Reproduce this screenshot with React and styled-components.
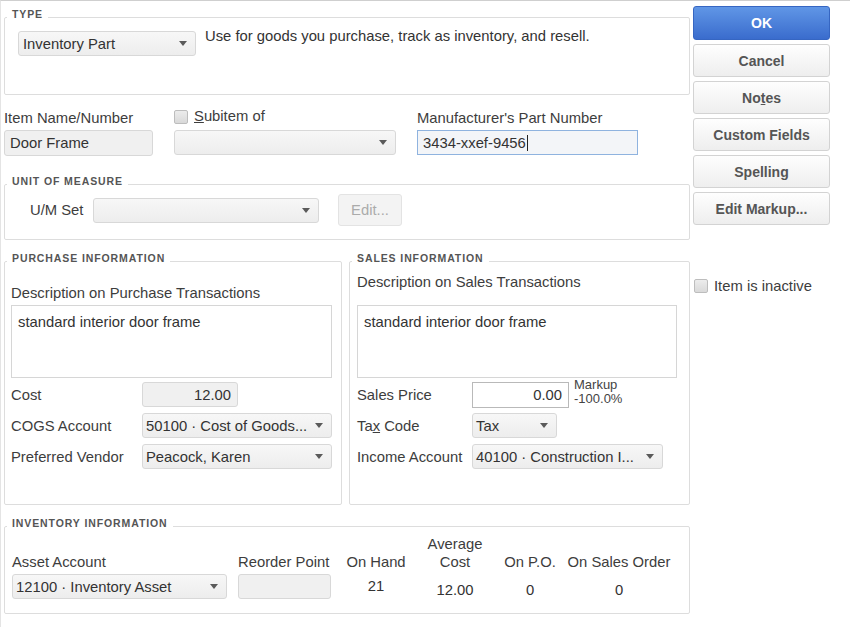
import React from 'react';
import styled, { createGlobalStyle } from 'styled-components';

const GlobalStyle = createGlobalStyle`
  html, body {
    margin: 0;
    padding: 0;
    background: #fff;
  }
  body {
    font-family: "Liberation Sans", Arial, sans-serif;
    font-size: 14.8px;
    color: #3d3d3d;
  }
  * {
    box-sizing: border-box;
  }
`;

const Window = styled.div`
  display: flex;
  align-items: flex-start;
  width: 850px;
  height: 627px;
  border-top: 1px solid #cfcfcf;
  border-left: 1px solid #e4e4e4;
  padding: 5px 0 0 3px;
`;

const Main = styled.div`
  width: 686px;
  margin-top: 2px;
  display: flex;
  flex-direction: column;
`;

const Side = styled.div`
  width: 137px;
  margin-left: 3px;
  display: flex;
  flex-direction: column;
`;

const Group = styled.fieldset`
  --pl: ${(p) => p.$pl || 7}px;
  margin: ${(p) => p.$mt || 0}px 0 0 0;
  min-width: 0;
  border: 1px solid #dddddd;
  border-radius: 2px;
  padding: ${(p) => p.$pt || 0}px ${(p) => p.$pr || 0}px ${(p) => p.$pb || 0}px var(--pl);
`;

const Legend = styled.legend`
  margin-left: calc(2px - var(--pl));
  padding: 0 5px 6px;
  font-size: 10.5px;
  line-height: 12px;
  font-weight: bold;
  letter-spacing: 0.9px;
  color: #555;
`;

const SelectBox = styled.div`
  display: flex;
  align-items: center;
  justify-content: space-between;
  width: ${(p) => p.$w}px;
  height: 25px;
  padding: 0 8px 0 ${(p) => p.$pad || 3}px;
  border: 1px solid #d8d8d8;
  border-radius: 3px;
  background: linear-gradient(#f7f7f7, #ededed);
  color: #333;
  white-space: nowrap;
  overflow: hidden;
`;

const Field = styled.div`
  display: flex;
  align-items: center;
  justify-content: ${(p) => (p.$right ? 'flex-end' : 'flex-start')};
  width: ${(p) => p.$w}px;
  height: ${(p) => p.$h || 25}px;
  padding: 0 6px 0 5px;
  border: 1px solid ${(p) => p.$border || '#d8d8d8'};
  border-radius: ${(p) => (p.$square ? 0 : 3)}px;
  background: ${(p) => p.$bg || '#f0f0f0'};
  color: #333;
  white-space: nowrap;
`;

const Caret = () => (
  <svg width="8" height="5" viewBox="0 0 8 5">
    <path d="M0 0h8L4 5z" fill="#5a5a5a" />
  </svg>
);

const Select = ({ w, children, pad }) => (
  <SelectBox $w={w} $pad={pad}>
    <span>{children}</span>
    <Caret />
  </SelectBox>
);

const TypeRow = styled.div`
  display: flex;
  align-items: flex-start;
  gap: 9px;
`;

const Hint = styled.div`
  margin-top: -3px;
  line-height: 17px;
  color: #333;
`;

const ItemRow = styled.div`
  display: grid;
  grid-template-columns: 149px 222px 221px;
  column-gap: 21px;
  margin-top: 15px;
`;

const Column = styled.div`
  display: flex;
  flex-direction: column;
`;

const Label = styled.div`
  display: flex;
  align-items: center;
  gap: 6px;
  line-height: 17px;
  margin-bottom: ${(p) => p.$mb ?? 3}px;
  margin-top: ${(p) => p.$mt || 0}px;
  color: #3d3d3d;
  white-space: nowrap;
`;

const Check = styled.span`
  display: inline-block;
  width: 14px;
  height: 14px;
  border: 1px solid #bdbdbd;
  border-radius: 2px;
  background: linear-gradient(#ececec, #d9d9d9);
`;

const Cursor = styled.span`
  display: inline-block;
  width: 1px;
  height: 16px;
  margin-left: 1px;
  background: #222;
`;

const UomRow = styled.div`
  display: flex;
  align-items: center;
  height: 32px;
`;

const UomLabel = styled.span`
  width: 63px;
`;

const DisabledButton = styled.div`
  display: flex;
  align-items: center;
  justify-content: center;
  width: 64px;
  height: 32px;
  margin-left: 19px;
  border: 1px solid #e3e3e3;
  border-radius: 3px;
  background: #f3f3f3;
  color: #ababab;
`;

const InfoRow = styled.div`
  display: grid;
  grid-template-columns: 338px 341px;
  column-gap: 7px;
  margin-top: 12px;
`;

const Desc = styled.div`
  width: ${(p) => p.$w}px;
  height: 73px;
  padding: 8px 6px;
  border: 1px solid #d6d6d6;
  background: #fff;
  color: #333;
`;

const FormGrid = styled.div`
  display: grid;
  grid-template-columns: ${(p) => p.$label}px auto;
  grid-auto-rows: 25px;
  row-gap: 6px;
  align-items: center;
  margin-top: 4px;
`;

const PriceCell = styled.div`
  display: flex;
  align-items: center;
`;

const Markup = styled.div`
  margin-left: 5px;
  margin-top: -5px;
  font-size: 13px;
  line-height: 14px;
  color: #444;
`;

const InvGrid = styled.div`
  display: grid;
  grid-template-columns: 226px 102px 72px 86px 64px 114px;
  grid-template-rows: 36px 25px;
  row-gap: 3px;
`;

const Head = styled.div`
  align-self: end;
  line-height: 18px;
  text-align: ${(p) => (p.$left ? 'left' : 'center')};
  color: #3d3d3d;
  white-space: nowrap;
`;

const Value = styled.div`
  align-self: ${(p) => (p.$drop ? 'end' : 'center')};
  text-align: center;
  line-height: 17px;
  color: #333;
`;

const Button = styled.button`
  height: ${(p) => (p.$primary ? 34 : 33)}px;
  margin: 0 0 4px;
  border: 1px solid ${(p) => (p.$primary ? '#3666c2' : '#d3d3d3')};
  border-radius: 3px;
  background: ${(p) =>
    p.$primary ? 'linear-gradient(#6096e6, #3a6ccd)' : 'linear-gradient(#fefefe, #eeeeee)'};
  color: ${(p) => (p.$primary ? '#fff' : '#555')};
  font-family: "Liberation Sans", Arial, sans-serif;
  font-size: 14px;
  font-weight: bold;
  padding: 0;
`;

const Inactive = styled.div`
  display: flex;
  align-items: center;
  gap: 6px;
  margin-top: 49px;
  margin-left: 1px;
  color: #3d3d3d;
`;

export default function App() {
  return (
    <>
      <GlobalStyle />
      <Window>
        <Main>
          <Group $pl={13} $pt={5} $pb={38}>
            <Legend>TYPE</Legend>
            <TypeRow>
              <Select w={178} pad={4}>Inventory Part</Select>
              <Hint>Use for goods you purchase, track as inventory, and resell.</Hint>
            </TypeRow>
          </Group>

          <ItemRow>
            <Column>
              <Label>Item Name/Number</Label>
              <Field $w={149} $h={26}>Door Frame</Field>
            </Column>
            <Column>
              <Label $mt={-2} $mb={5}>
                <Check />
                <span>
                  <u>S</u>ubitem of
                </span>
              </Label>
              <Select w={222} />
            </Column>
            <Column>
              <Label>Manufacturer's Part Number</Label>
              <Field $w={221} $border="#8fb3df" $bg="#f3f5f8" $square>
                3434-xxef-9456
                <Cursor />
              </Field>
            </Column>
          </ItemRow>

          <Group $mt={19} $pl={25} $pt={1} $pb={13}>
            <Legend>UNIT OF MEASURE</Legend>
            <UomRow>
              <UomLabel>U/M Set</UomLabel>
              <Select w={226} />
              <DisabledButton>Edit...</DisabledButton>
            </UomRow>
          </Group>

          <InfoRow>
            <Group $pl={6} $pt={0} $pb={35}>
              <Legend>PURCHASE INFORMATION</Legend>
              <Label $mt={15} $mb={3}>Description on Purchase Transactions</Label>
              <Desc $w={321}>standard interior door frame</Desc>
              <FormGrid $label={131}>
                <span>Cost</span>
                <Field $w={96} $right>12.00</Field>
                <span>COGS Account</span>
                <Select w={190}>50100 · Cost of Goods...</Select>
                <span>Preferred Vendor</span>
                <Select w={190}>Peacock, Karen</Select>
              </FormGrid>
            </Group>

            <Group $pl={7} $pt={0} $pb={35}>
              <Legend>SALES INFORMATION</Legend>
              <Label $mt={4} $mb={14}>Description on Sales Transactions</Label>
              <Desc $w={320}>standard interior door frame</Desc>
              <FormGrid $label={115}>
                <span>Sales Price</span>
                <PriceCell>
                  <Field $w={97} $h={26} $right $bg="#fff" $border="#b9b9b9" $square>
                    0.00
                  </Field>
                  <Markup>
                    Markup
                    <br />
                    -100.0%
                  </Markup>
                </PriceCell>
                <span>
                  Ta<u>x</u> Code
                </span>
                <Select w={85}>Tax</Select>
                <span>Income Account</span>
                <Select w={191}>40100 · Construction I...</Select>
              </FormGrid>
            </Group>
          </InfoRow>

          <Group $mt={12} $pl={7} $pt={0} $pb={14}>
            <Legend>INVENTORY INFORMATION</Legend>
            <InvGrid>
              <Head $left>Asset Account</Head>
              <Head $left>Reorder Point</Head>
              <Head>On Hand</Head>
              <Head>
                Average
                <br />
                Cost
              </Head>
              <Head>On P.O.</Head>
              <Head>On Sales Order</Head>
              <Select w={215}>12100 · Inventory Asset</Select>
              <Field $w={93} />
              <Value>21</Value>
              <Value $drop>12.00</Value>
              <Value $drop>0</Value>
              <Value $drop>0</Value>
            </InvGrid>
          </Group>
        </Main>

        <Side>
          <Button $primary>OK</Button>
          <Button>Cancel</Button>
          <Button>
            No<u>t</u>es
          </Button>
          <Button>Custom Fields</Button>
          <Button>
            Spellin<u>g</u>
          </Button>
          <Button>Edit Markup...</Button>
          <Inactive>
            <Check />
            <span>Item is inactive</span>
          </Inactive>
        </Side>
      </Window>
    </>
  );
}
